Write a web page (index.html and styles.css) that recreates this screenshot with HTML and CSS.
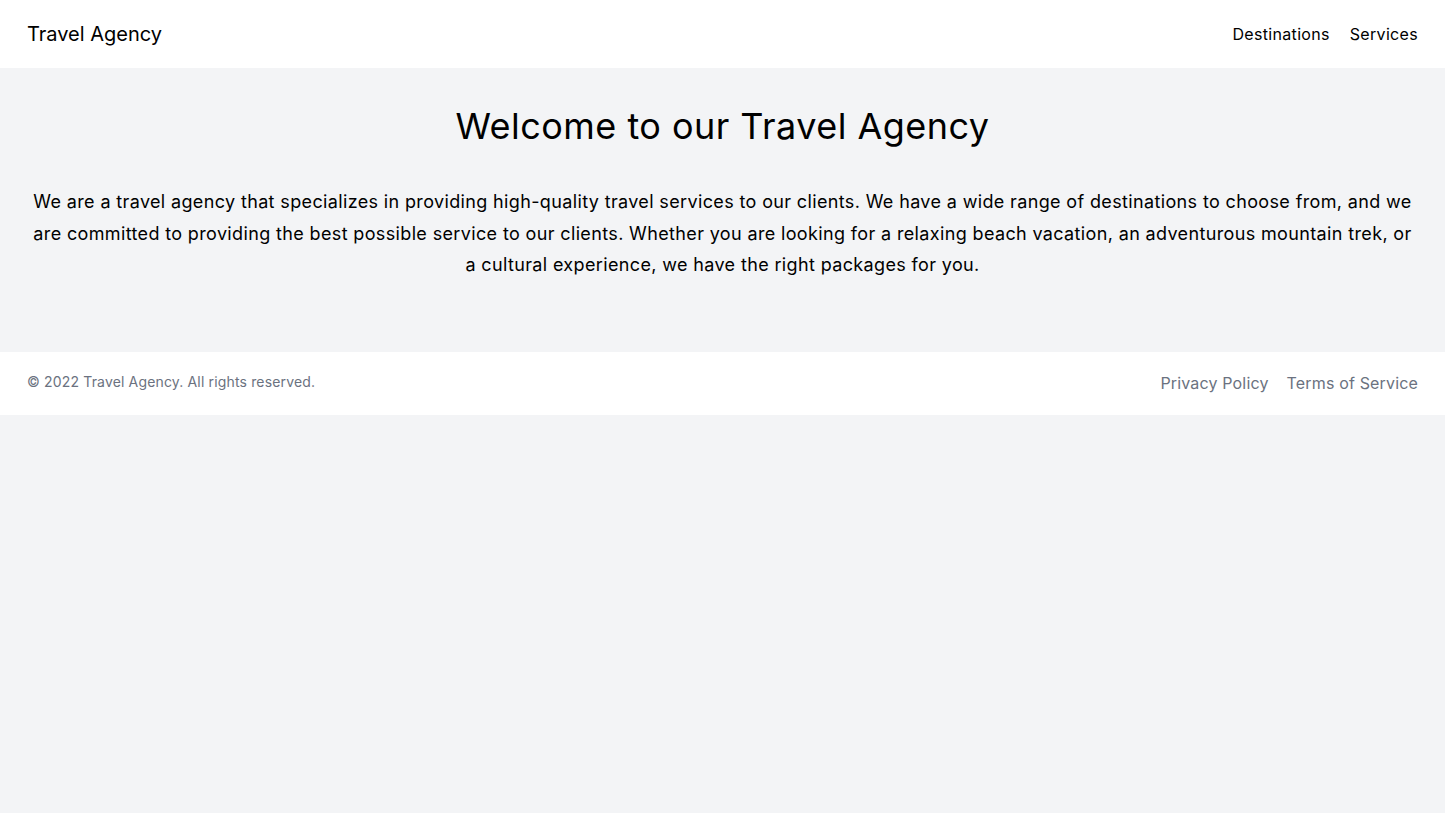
FILE: index.html
```html
<!DOCTYPE html>
<html lang="en">
<head>
    <meta charset="UTF-8">
    <meta name="viewport" content="width=device-width, initial-scale=1.0">
    <title>Travel Agency</title>
    <link rel="stylesheet" href="styles.css">
</head>
<body>
    <header class="site-header">
        <a href="#" class="logo">Travel Agency</a>
        <nav class="main-nav">
            <a href="#">Destinations</a>
            <a href="#">Services</a>
        </nav>
    </header>

    <main class="intro">
        <h1>Welcome to our Travel Agency</h1>
        <p>We are a travel agency that specializes in providing high-quality travel services to our clients. We have a wide range of destinations to choose from, and we are committed to providing the best possible service to our clients. Whether you are looking for a relaxing beach vacation, an adventurous mountain trek, or a cultural experience, we have the right packages for you.</p>
    </main>

    <footer class="site-footer">
        <p class="copyright">&copy; 2022 Travel Agency. All rights reserved.</p>
        <nav class="footer-nav">
            <a href="#">Privacy Policy</a>
            <a href="#">Terms of Service</a>
        </nav>
    </footer>
</body>
</html>
```

FILE: styles.css
```css
:root {
    --bg-color: #f3f4f6;
    --text-color: #000;
    --muted-color: #6b7280;
}

* {
    box-sizing: border-box;
}

body {
    font-family: Inter, 'Liberation Sans', sans-serif;
    letter-spacing: 0.01em;
    background-color: var(--bg-color);
    color: var(--text-color);
    margin: 0;
    min-height: 100vh;
}

a {
    color: inherit;
    text-decoration: none;
}

.site-header {
    background: white;
    height: 68px;
    padding: 0 27px;
    display: flex;
    justify-content: space-between;
    align-items: center;
}

.logo {
    font-size: 20px;
    letter-spacing: 0;
}

.main-nav {
    display: flex;
    gap: 20px;
    font-size: 16px;
    letter-spacing: 0.02em;
}

.intro {
    padding: 34px 27px 71px;
    text-align: center;
}

.intro h1 {
    font-size: 36px;
    font-weight: 400;
    line-height: 48px;
    letter-spacing: 0.013em;
    margin: 0 0 36px;
}

.intro p {
    font-size: 18px;
    line-height: 31.5px;
    letter-spacing: 0.02em;
    margin: 0;
}

.site-footer {
    background: white;
    height: 63px;
    padding: 19px 27px 20px;
    display: flex;
    justify-content: space-between;
    align-items: flex-start;
    color: var(--muted-color);
}

.copyright {
    font-size: 14px;
    line-height: 20px;
    margin: 1px 0 0;
}

.footer-nav {
    display: flex;
    gap: 18px;
    font-size: 16px;
    line-height: 24px;
    letter-spacing: 0.01em;
}
```
